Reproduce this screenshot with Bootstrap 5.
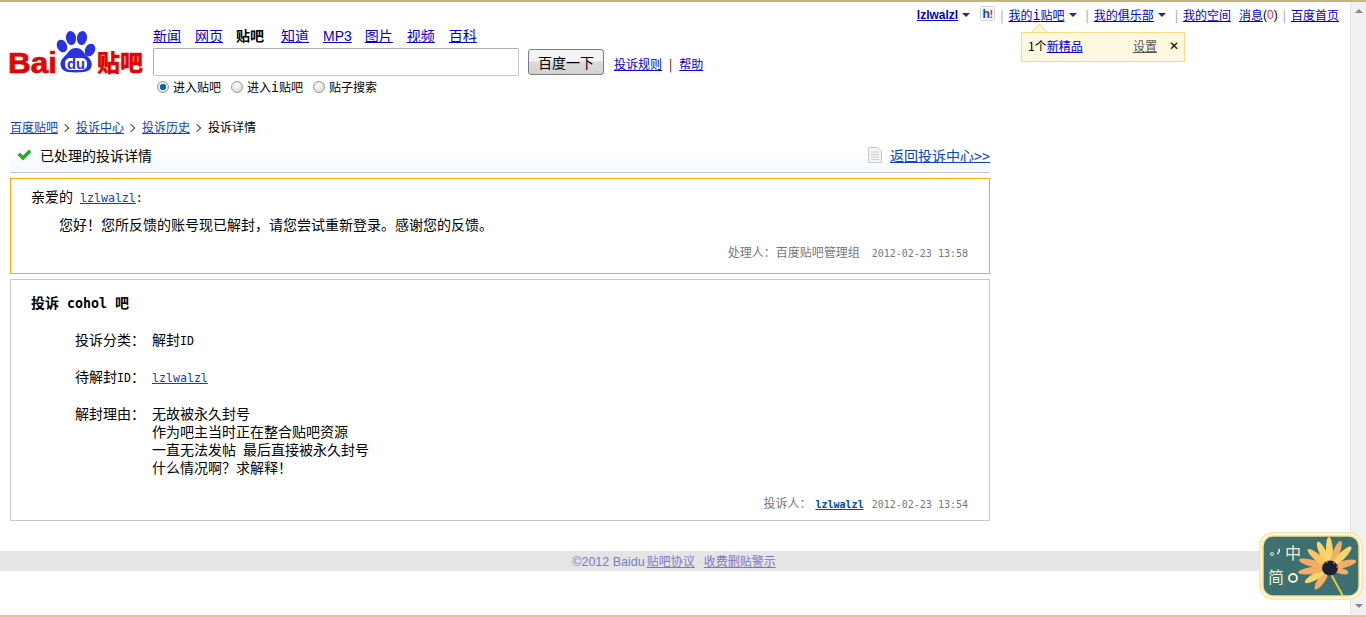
<!DOCTYPE html>
<html lang="zh">
<head>
<meta charset="utf-8">
<title>投诉详情</title>
<link href="https://cdn.jsdelivr.net/npm/bootstrap@5.3.0/dist/css/bootstrap.min.css" rel="stylesheet">
<style>
html,body{height:617px;overflow:hidden;background:#fff}
body{font-family:"Noto Sans CJK SC","Liberation Sans",sans-serif;font-size:14px;line-height:18px;color:#000}
a{color:#0000cc}
.screen{height:617px;border-top:2px solid #c6b27e;border-bottom:2px solid #dcc98e;position:relative}
.pagearea{width:1350px;position:relative}
.sbar{width:16px;background:#f1f1f1;border-left:1px solid #e4e4e4}
.sup,.sdown{width:0;height:0;border-left:4px solid transparent;border-right:4px solid transparent;margin:7px auto}
.sup{border-bottom:4px solid #8a8a8a}.sdown{border-top:4px solid #8a8a8a}
.lat{font-family:"DejaVu Sans Mono",monospace;font-size:11.6px;line-height:1}
.lati{font-family:"DejaVu Sans Mono",monospace;font-size:13.3px;line-height:1}
.lat12{font-family:"DejaVu Sans Mono",monospace;font-size:10px;line-height:1}
.topbar{height:24px;padding:4px 11px 0 0;font-size:12px;line-height:18px}
.topbar .sep{color:#999;margin:0 5px}
.uname{font-family:"Liberation Sans",sans-serif;font-weight:700;font-size:12px}
.tri{display:block;flex:none;width:0;height:0;border-left:4px solid transparent;border-right:4px solid transparent;border-top:4px solid #1c2c8c;margin:7px 4px 0 4px}
.himg{margin-left:6px;display:block}
.tipbox{position:absolute;left:1021px;top:30px;width:164px;height:30px;background:#fef8e0;border:1px solid #f9dc87;font-size:12px;line-height:26px;padding:0 5px 0 6px}
.tipbox a.setlink{color:#555}
.tiparrow{position:absolute;left:1034px;top:24px;width:11px;height:11px;transform:rotate(45deg);background:#fef8e0;border-left:1px solid #f9dc87;border-top:1px solid #f9dc87}
.tipx{font-size:12px;font-family:"DejaVu Sans",sans-serif}
.headrow{padding-left:10px;height:77px}
.logobox{width:143px;margin-top:3px}
.logobox svg{display:block;overflow:visible}
.tabs{height:23px;font-size:14px;line-height:21px;margin-top:-1px}
.tabs a{margin-right:14px}
.tabs b{margin:0 17px 0 -1px}
.tabs a.mp3{margin-right:13px}
.arial{font-family:"Liberation Sans",sans-serif}
.inp{width:366px;height:28px;border:1px solid #c8c8d0;border-top-color:#aeaeb8;border-left-color:#aeaeb8;border-radius:2px;background:#fff;padding:0 4px}
.gobtn{width:76px;height:26px;margin:1px 0 0 9px;border:1px solid #7c7c7c;border-radius:3px;background:linear-gradient(#f3f3f3 0,#f3f3f3 45%,#dcdcdc 50%,#d2d2d2 100%);font-size:14px;line-height:22px;padding:0;color:#000}
.helplinks{font-size:12px;margin-left:10px;padding-top:7px}
.helplinks span{margin:0 7px}
.radios{font-size:12px;line-height:16px;padding:3px 0 0 4px}
.radios label{margin-right:10px;display:inline-flex;align-items:center;gap:4px}
.radios input{appearance:none;width:12px;height:12px;border-radius:50%;margin:0;border:1px solid #9a9a9a;background:radial-gradient(circle at 40% 35%,#fff,#cfcfcf)}
.radios input:checked{background:radial-gradient(circle,#0d5f9e 0,#0d6fb0 42%,#e8eef2 48%,#cfd6da 100%)}
.crumbs{margin:15px 0 0 10px;font-size:12px;line-height:18px}
.crumbs a{color:#0645c2}
.crumbs i{display:inline-block;width:6px;height:6px;border-top:1px solid #444;border-right:1px solid #444;transform:rotate(45deg);margin:0 8px 1px 4px}
.titlebar{margin:11px 0 0 10px;width:980px;height:26px;background:linear-gradient(#fff,#f4f9fe);border-bottom:1px solid #c9c9c9;padding:0 0 9px 7px;line-height:18px}
.titlebar a{color:#0645c2}
.box{margin-left:10px;width:980px}
.box1{margin-top:5px;height:96px;border:1px solid #ffab00;padding:8px 21px 0 20px}
.box2{margin-top:5px;height:242px;border:1px solid #c8c8c8;padding:13px 21px 0 20px}
.box a{color:#0645c2}
.greeting{height:18px}
.msg{padding-left:28px;margin-top:10px;height:18px}
.foot1{font-size:12px;color:#777;text-align:right;margin-top:10px;height:18px}
.btitle{font-weight:700;height:18px}
.frow{margin-top:19px;padding-left:44px}
.oneline{height:18px}
.frow .lab{width:77px;flex:none}
.foot2{font-size:12px;color:#777;margin-top:18px;height:18px;justify-content:flex-end}
.pagefoot{margin-top:30px;height:20px;background:#e5e5e5;font-size:12px;line-height:20px;color:#7a78cc;padding-right:2px}
.pagefoot .arial{font-size:12.5px;margin-right:2px}
.pagefoot a{color:#7a78cc}
.linkgap{margin-left:9px}
.bwidget{position:absolute;left:1259px;top:530px}
</style>
</head>
<body>
<div class="screen d-flex">
  <div class="pagearea">
    <div class="topbar d-flex justify-content-end align-items-start">
      <a class="uname" href="#">lzlwalzl</a><span class="tri"></span>
      <svg class="himg" width="15" height="15" viewBox="0 0 15 15"><rect x=".5" y=".5" width="14" height="14" rx="1" fill="#fff" stroke="#cfd3d8"/><rect x="2" y="2" width="11" height="11" fill="#eef2f7"/><text x="2.500" y="12" font-family="Liberation Sans" font-weight="700" font-size="12" fill="#1c3fb0">h</text><text x="9.500" y="12" font-family="Liberation Sans" font-weight="700" font-size="11" fill="#d93025">!</text></svg>
      <span class="sep">|</span>
      <a href="#">我的<span class="lati">i</span>贴吧</a><span class="tri"></span>
      <span class="sep">|</span>
      <a href="#">我的俱乐部</a><span class="tri"></span>
      <span class="sep">|</span>
      <a href="#">我的空间</a>
      <a class="ms-2" href="#">消息</a><span class="arial">(<span class="text-danger">0</span>)</span>
      <span class="sep">|</span>
      <a href="#">百度首页</a>
    </div>
    <div class="tiparrow"></div>
    <div class="tipbox d-flex justify-content-between">
      <span>1个<a href="#">新精品</a></span>
      <span class="d-flex gap-2"><a class="setlink" href="#">设置</a><span class="tipx ms-1">✕</span></span>
    </div>
    <div class="headrow d-flex">
      <div class="logobox">
        <svg width="136" height="48" viewBox="0 0 136 48">
          <g fill="#2932e1"><ellipse cx="52" cy="17" rx="5" ry="6.500" transform="rotate(-25 52 17)"/><ellipse cx="61" cy="9" rx="5" ry="7" transform="rotate(-8 61 9)"/><ellipse cx="72" cy="9" rx="5" ry="7" transform="rotate(8 72 9)"/><ellipse cx="80" cy="21" rx="5" ry="6.500" transform="rotate(25 80 21)"/><path d="M66 19 C72 19 74 24 78 28 C84 33 83 42 74 43 C69 43.500 63 43.500 58 43 C50 42 48 33 54 28 C58 24 60 19 66 19Z"/></g>
          <rect x="55" y="29" width="22" height="12" rx="5" fill="#fff"/>
          <text x="57" y="39.500" font-family="Liberation Sans" font-weight="700" font-size="14" fill="#2932e1" textLength="18" lengthAdjust="spacingAndGlyphs">du</text>
          <text x="-2" y="44" font-family="Liberation Sans" font-weight="700" font-size="29" fill="#e10601" stroke="#e10601" stroke-width=".7" textLength="49" lengthAdjust="spacingAndGlyphs">Bai</text>
          <text x="87" y="42" font-family="Noto Sans CJK SC" font-weight="900" font-size="23" fill="#e10601" stroke="#e10601" stroke-width=".3" textLength="46" lengthAdjust="spacingAndGlyphs">贴吧</text>
        </svg>
      </div>
      <div>
        <div class="tabs"><a href="#">新闻</a><a href="#">网页</a><b>贴吧</b><a href="#">知道</a><a class="arial mp3" href="#">MP3</a><a href="#">图片</a><a href="#">视频</a><a href="#">百科</a></div>
        <div class="d-flex align-items-start">
          <input class="inp" type="text" aria-label="搜索">
          <button class="gobtn" type="button">百度一下</button>
          <div class="helplinks"><a href="#">投诉规则</a><span>|</span><a href="#">帮助</a></div>
        </div>
        <div class="radios">
          <label><input type="radio" name="m" checked><span>进入贴吧</span></label><label><input type="radio" name="m"><span>进入<span class="lati">i</span>贴吧</span></label><label><input type="radio" name="m"><span>贴子搜索</span></label>
        </div>
      </div>
    </div>
    <div class="crumbs"><a href="#">百度贴吧</a><i></i><a href="#">投诉中心</a><i></i><a href="#">投诉历史</a><i></i>投诉详情</div>
    <div class="titlebar d-flex justify-content-between align-items-center">
      <span class="d-flex align-items-center gap-2">
        <svg width="15" height="12" viewBox="0 0 15 12"><path d="M0.5 6 L3 3.500 L6 6.500 L12 0.500 L14.500 3 L6 11.500 Z" fill="#2fa52a"/></svg>
        已处理的投诉详情
      </span>
      <span class="d-flex align-items-center gap-2">
        <svg width="14" height="16" viewBox="0 0 14 16"><path d="M.5.5H9.500L13.500 4.500V15.500H.5Z" fill="#f4f4f4" stroke="#c8c8c8"/><path d="M3 5H11M3 7.500H11M3 10H11M3 12.500H11" stroke="#d0d0d0"/></svg>
        <a href="#">返回投诉中心<span class="lati">&gt;&gt;</span></a>
      </span>
    </div>
    <div class="box box1">
      <div class="greeting">亲爱的<span class="lat"> </span><a class="lat" href="#">lzlwalzl</a><span class="lat">:</span></div>
      <div class="msg">您好！您所反馈的账号现已解封，请您尝试重新登录。感谢您的反馈。</div>
      <div class="foot1">处理人：百度贴吧管理组<span class="lat12" style="margin-left:12px">2012-02-23 13:58</span></div>
    </div>
    <div class="box box2">
      <div class="btitle">投诉<span class="lati"> cohol </span>吧</div>
      <div class="frow oneline d-flex"><div class="lab">投诉分类：</div><div>解封<span class="lat">ID</span></div></div>
      <div class="frow oneline d-flex"><div class="lab">待解封<span class="lat">ID</span>：</div><div><a class="lat" href="#">lzlwalzl</a></div></div>
      <div class="frow d-flex"><div class="lab">解封理由：</div><div>无故被永久封号<br>作为吧主当时正在整合贴吧资源<br>一直无法发帖<span class="lat"> </span>最后直接被永久封号<br>什么情况啊？求解释！</div></div>
      <div class="foot2 d-flex align-items-baseline">投诉人：<a class="lat12 ms-1" href="#"><b>lzlwalzl</b></a><span class="lat12 ms-2">2012-02-23 13:54</span></div>
    </div>
    <div class="pagefoot text-center"><span class="arial">©2012 Baidu</span><a href="#">贴吧协议</a><a class="linkgap" href="#">收费删贴警示</a></div>
    <svg class="bwidget" width="104" height="68" viewBox="0 0 104 68">
      <defs><clipPath id="wclip"><rect x="4" y="4" width="96" height="60" rx="10"/></clipPath></defs>
      <rect x="1" y="1" width="102" height="66" rx="13" fill="#fff" stroke="#fbe39b" stroke-width="1.500"/>
      <rect x="4" y="4" width="96" height="60" rx="10" fill="#3d7070" stroke="#f6dc82" stroke-width="1.500"/>
      <g clip-path="url(#wclip)">
      <g transform="translate(71 36)">
        <path d="M1 6 L14 30" stroke="#e8c84a" stroke-width="2" fill="none"/>
        <g fill="#f5ad62">
          <ellipse cy="-16" rx="3.500" ry="13" transform="rotate(-25)" fill="#fbd56b"/>
          <ellipse cy="-17" rx="3.500" ry="14" transform="rotate(-2)" fill="#fbd56b"/>
          <ellipse cy="-16" rx="3.500" ry="13" transform="rotate(22)"/>
          <ellipse cy="-17" rx="3.500" ry="13" transform="rotate(45)" fill="#fbd56b"/>
          <ellipse cy="-15" rx="3.500" ry="12" transform="rotate(75)"/>
          <ellipse cy="-11" rx="3" ry="8" transform="rotate(105)"/>
          <ellipse cy="-15" rx="3.500" ry="11" transform="rotate(215)"/>
          <ellipse cy="-16" rx="3.500" ry="13" transform="rotate(240)" fill="#fbd56b"/>
          <ellipse cy="-18" rx="3.500" ry="14" transform="rotate(262)"/>
          <ellipse cy="-18" rx="3.500" ry="14" transform="rotate(285)"/>
          <ellipse cy="-16" rx="3.500" ry="13" transform="rotate(310)" fill="#f9c565"/>
        </g>
        <ellipse rx="8" ry="7.500" fill="#1e2030"/>
        <circle cx="4" cy="-5" r="1" fill="#7d8a3a"/><circle cx="-3" cy="-6" r="1" fill="#7d8a3a"/><circle cx="7" cy="-1" r="1" fill="#7d8a3a"/>
      </g>
      </g>
      <text x="26" y="27" font-family="Noto Sans CJK SC" font-size="16" fill="#f3efcf">中</text>
      <text x="9" y="51" font-family="Noto Sans CJK SC" font-size="16" fill="#f3efcf">简</text>
      <circle cx="34" cy="46" r="4" fill="none" stroke="#f3efcf" stroke-width="2"/>
      <circle cx="13" cy="22" r="1.500" fill="none" stroke="#f3efcf"/>
      <path d="M20 17 q1 3 -2 5" stroke="#f3efcf" stroke-width="1.500" fill="none"/>
    </svg>
  </div>
  <div class="sbar d-flex flex-column justify-content-between"><div class="sup"></div><div class="sdown"></div></div>
</div>
<script src="https://cdn.jsdelivr.net/npm/bootstrap@5.3.0/dist/js/bootstrap.bundle.min.js"></script>
</body>
</html>
